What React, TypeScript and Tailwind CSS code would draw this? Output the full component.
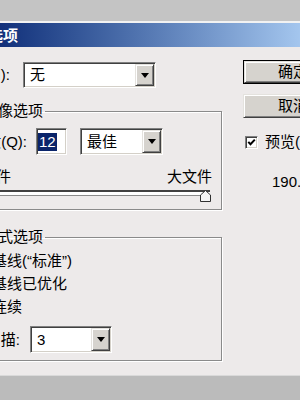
import type { ReactNode } from 'react'

const sunken =
  'border border-t-[#808080] border-l-[#808080] border-b-white border-r-white shadow-[inset_1px_1px_0_#404040,inset_-1px_-1px_0_#d4d0c8]'
const raised =
  'border border-t-[#e4e2de] border-l-[#e4e2de] border-b-[#404040] border-r-[#404040] shadow-[inset_1px_1px_0_#ffffff,inset_-1px_-1px_0_#808080] bg-[#d6d3ce]'

function DropArrow() {
  return (
    <svg width="8" height="5" viewBox="0 0 8 5">
      <path d="M0 0 H8 L4 5 Z" fill="#000" />
    </svg>
  )
}

function Select({ value, className }: { value: string; className: string }) {
  return (
    <div className={`flex bg-white ${sunken} ${className}`}>
      <div className="flex-1 flex items-center pl-[6px] leading-[18px]">{value}</div>
      <div className={`w-[19px] my-[1px] mr-[1px] flex items-center justify-center ${raised}`}>
        <DropArrow />
      </div>
    </div>
  )
}

function Button({ children, isDefault, className = '' }: { children: ReactNode; isDefault?: boolean; className?: string }) {
  return (
    <div className={`w-[100px] h-[24px] shrink-0 ${isDefault ? 'border border-black' : ''} ${className}`}>
      <div className={`h-full flex items-center justify-center leading-[18px] ${raised}`}>{children}</div>
    </div>
  )
}

function Label({ width, text }: { width: string; text: string }) {
  return (
    <div className={`${width} shrink-0 flex justify-end`}>
      <span className="shrink-0 whitespace-nowrap leading-[18px]">{text}</span>
    </div>
  )
}

const groupBox =
  'ml-[-45px] w-[267px] border border-[#8a8a8a] shadow-[1px_1px_0_#ffffff,inset_1px_1px_0_#ffffff] px-0'

export default function App() {
  return (
    <div className="w-[300px] h-[400px] overflow-hidden bg-[#bbbbbb] text-[15px] text-black font-['Liberation_Sans','Noto_Sans_CJK_SC',sans-serif]">
      <div className="h-[21px] bg-[#c4c4c4]" />
      <div className="h-[2px] bg-[#f2f2f2]" />
      <div className="h-[24px] flex items-center bg-linear-to-r from-[#12307a] to-[#a4c6ee]">
        <span className="ml-[-12px] font-bold text-white leading-none">选项</span>
      </div>

      <div className="h-[329px] bg-[#edeaea] flex border-b border-[#d9d9d9]">
        {/* left side: matte + groups */}
        <div className="w-[222px] shrink-0 flex flex-col">
          <div className="mt-[15px] h-[26px] flex items-center">
            <Label width="w-[10px]" text="杂边(M):" />
            <Select className="ml-[13px] w-[133px] h-[26px]" value="无" />
          </div>

          <fieldset className={`mt-[14px] pt-[8px] pb-[7px] ${groupBox}`}>
            <legend className="ml-[25px] px-[2px] leading-[18px]">图像选项</legend>
            <div className="h-[27px] flex items-center">
              <Label width="w-[71px]" text="品质(Q):" />
              <div className={`ml-[9px] w-[31px] h-[27px] bg-white flex items-center pl-[1px] ${sunken}`}>
                <span className="bg-[#0a246a] text-white px-[1px] leading-[18px]">12</span>
              </div>
              <Select className="ml-[13px] w-[83px] h-[27px]" value="最佳" />
            </div>
            <div className="mt-[13px] ml-[10px] mr-[9px] flex justify-between leading-[18px]">
              <span>小文件</span>
              <span>大文件</span>
            </div>
            <div className="relative h-[12px] ml-[10px] mr-[11px]">
              <div className="mt-[4px] h-[6px] border-t-2 border-t-[#404040] border-b border-b-[#8a8a8a] bg-white" />
              <svg className="absolute right-[-1px] top-0" width="11" height="12" viewBox="0 0 11 12">
                <path d="M0.5 11.5 V5 L5.5 0.5 L10.5 5 V11.5 Z" fill="#f4f4f4" stroke="#303030" />
              </svg>
            </div>
          </fieldset>

          <fieldset className={`mt-[18px] pt-[4px] pb-[7px] ${groupBox}`}>
            <legend className="ml-[25px] px-[2px] leading-[18px]">格式选项</legend>
            <div className="h-[23px] flex items-center pl-[36px] whitespace-nowrap">基线(“标准”)</div>
            <div className="h-[23px] flex items-center pl-[36px] whitespace-nowrap">基线已优化</div>
            <div className="h-[23px] flex items-center pl-[36px] whitespace-nowrap">连续</div>
            <div className="mt-[7px] h-[27px] flex items-center">
              <Label width="w-[64px]" text="扫描:" />
              <Select className="ml-[10px] w-[82px] h-[27px]" value="3" />
            </div>
          </fieldset>
        </div>

        {/* right side: buttons and preview */}
        <div className="flex-1 min-w-0 pl-[21px] pt-[13px] flex flex-col">
          <Button isDefault>确定</Button>
          <Button className="mt-[10px]">取消</Button>
          <div className="mt-[15px] h-[18px] pl-[2px] flex items-center whitespace-nowrap">
            <div className={`w-[13px] h-[13px] shrink-0 bg-white flex items-center justify-center ${sunken}`}>
              <svg width="9" height="9" viewBox="0 0 9 9">
                <path d="M1.3 3.8 L3.5 6.3 L7.8 1.6" fill="none" stroke="#000" strokeWidth="2" />
              </svg>
            </div>
            <span className="ml-[7px] leading-[18px]">预览(P)</span>
          </div>
          <div className="mt-[22px] pl-[29px] leading-[18px] whitespace-nowrap">190.1K</div>
        </div>
      </div>
    </div>
  )
}
